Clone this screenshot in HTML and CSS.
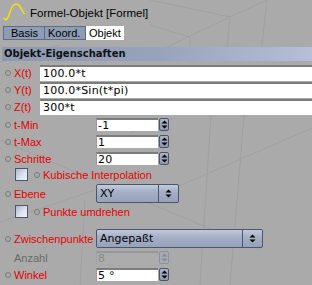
FILE: index.html
```html
<!DOCTYPE html>
<html>
<head>
<meta charset="utf-8">
<link rel="stylesheet" href="styles.css">
</head>
<body>
<div class="win">
  <svg class="bg" width="312" height="285" viewBox="0 0 312 285">
    <g stroke="#a0a0a0" stroke-width="1" fill="none">
      <line x1="150" y1="0" x2="230" y2="17"/>
      <line x1="230" y1="17" x2="267" y2="0"/>
      <line x1="230" y1="17" x2="226" y2="62"/>
      <line x1="267" y1="0" x2="260" y2="62"/>
      <line x1="150" y1="25" x2="190" y2="37"/>
      <line x1="190" y1="37" x2="190" y2="62"/>
      <line x1="230" y1="17" x2="150" y2="55"/>
      <line x1="60" y1="45" x2="0" y2="62"/>
      <line x1="211" y1="115" x2="200" y2="285"/>
      <line x1="244" y1="115" x2="230" y2="285"/>
      <line x1="312" y1="128" x2="170" y2="190"/>
      <line x1="175" y1="118" x2="130" y2="133"/>
      <line x1="0" y1="140" x2="260" y2="250"/>
      <line x1="0" y1="222" x2="95" y2="190"/>
      <line x1="80" y1="285" x2="85" y2="200"/>
    </g>
  </svg>
  <div class="title">
    <svg class="icon" width="24" height="20" viewBox="0 0 24 20">
      <path d="M1 16 C2.5 19 4.5 18 6 13 C8 6 10 2 13 2 C15.5 2 17 4 18.5 7 C19.5 9 20.5 11 21.5 12" stroke="#f2e400" stroke-width="1.5" fill="none"/>
    </svg>
    <span class="title-text">Formel-Objekt [Formel]</span>
  </div>
  <div class="tabs">
    <div class="tab t1">Basis</div>
    <div class="tab t2">Koord.</div>
    <div class="tab t3 active">Objekt</div>
  </div>
  <div class="section">Objekt-Eigenschaften</div>

  <div class="row frow f1">
    <span class="dot"></span><span class="lbl flbl">X(t)</span>
    <div class="wide">100.0*t</div>
  </div>
  <div class="row frow">
    <span class="dot"></span><span class="lbl flbl">Y(t)</span>
    <div class="wide">100.0*Sin(t*pi)</div>
  </div>
  <div class="row frow">
    <span class="dot"></span><span class="lbl flbl">Z(t)</span>
    <div class="wide">300*t</div>
  </div>

  <div class="row nrow n1">
    <span class="dot"></span><span class="lbl">t-Min</span>
    <div class="num">-1</div><div class="spin"><svg width="7" height="9" viewBox="0 0 7 9"><path d="M3.5 0.5 L6.5 3.5 L0.5 3.5 Z M3.5 8.5 L6.5 5.5 L0.5 5.5 Z" fill="#000"/></svg></div>
  </div>
  <div class="row nrow">
    <span class="dot"></span><span class="lbl">t-Max</span>
    <div class="num">1</div><div class="spin"><svg width="7" height="9" viewBox="0 0 7 9"><path d="M3.5 0.5 L6.5 3.5 L0.5 3.5 Z M3.5 8.5 L6.5 5.5 L0.5 5.5 Z" fill="#000"/></svg></div>
  </div>
  <div class="row nrow">
    <span class="dot"></span><span class="lbl">Schritte</span>
    <div class="num">20</div><div class="spin"><svg width="7" height="9" viewBox="0 0 7 9"><path d="M3.5 0.5 L6.5 3.5 L0.5 3.5 Z M3.5 8.5 L6.5 5.5 L0.5 5.5 Z" fill="#000"/></svg></div>
  </div>

  <div class="row crow c1">
    <span class="check"></span><span class="dot cdot"></span><span class="clbl">Kubische Interpolation</span>
  </div>

  <div class="row drow d1">
    <span class="dot"></span><span class="lbl">Ebene</span>
    <div class="drop small"><span class="dtext">XY</span><span class="darrow"><svg width="7" height="9" viewBox="0 0 7 9"><path d="M3.5 0.5 L6.5 3.5 L0.5 3.5 Z M3.5 8.5 L6.5 5.5 L0.5 5.5 Z" fill="#000"/></svg></span></div>
  </div>

  <div class="row crow c2">
    <span class="check"></span><span class="dot cdot"></span><span class="clbl">Punkte umdrehen</span>
  </div>

  <div class="row drow d2">
    <span class="dot"></span><span class="lbl">Zwischenpunkte</span>
    <div class="drop large"><span class="dtext">Angepaßt</span><span class="darrow"><svg width="7" height="9" viewBox="0 0 7 9"><path d="M3.5 0.5 L6.5 3.5 L0.5 3.5 Z M3.5 8.5 L6.5 5.5 L0.5 5.5 Z" fill="#000"/></svg></span></div>
  </div>

  <div class="row nrow n2 dis">
    <span class="nodot"></span><span class="lbl">Anzahl</span>
    <div class="num">8</div><div class="spin"><svg width="7" height="9" viewBox="0 0 7 9"><path d="M3.5 0.5 L6.5 3.5 L0.5 3.5 Z M3.5 8.5 L6.5 5.5 L0.5 5.5 Z" fill="#858a94"/></svg></div>
  </div>
  <div class="row nrow">
    <span class="dot"></span><span class="lbl">Winkel</span>
    <div class="num">5 °</div><div class="spin"><svg width="7" height="9" viewBox="0 0 7 9"><path d="M3.5 0.5 L6.5 3.5 L0.5 3.5 Z M3.5 8.5 L6.5 5.5 L0.5 5.5 Z" fill="#000"/></svg></div>
  </div>
</div>
</body>
</html>
```
FILE: styles.css
```css
html, body {
  margin: 0;
  padding: 0;
  background: #aaaaaa;
}
.win {
  position: relative;
  width: 312px;
  height: 285px;
  overflow: hidden;
  font-family: "Liberation Sans", Arial, sans-serif;
  font-size: 11px;
  color: #000;
}
.bg {
  position: absolute;
  left: 0;
  top: 0;
}
.title, .tabs, .section, .row {
  position: relative;
}
.title {
  display: flex;
  align-items: center;
  height: 26px;
  padding-left: 3px;
}
.icon {
  margin-right: 3px;
  margin-top: -2px;
}
.title-text {
  font-size: 11.5px;
  margin-top: -1px;
}
.tabs {
  display: flex;
  margin-left: 3px;
  height: 14px;
}
.tab {
  box-sizing: border-box;
  height: 14px;
  background: #8e9cb4;
  border: 1px solid #5f6c82;
  border-right: none;
  line-height: 12px;
  font-size: 11px;
}
.t1 {
  width: 41px;
  padding-left: 7px;
}
.t2 {
  width: 42px;
  padding-left: 3px;
  border-right: 1px solid #5f6c82;
}
.t3 {
  width: 38px;
  padding-left: 2px;
}
.tab.active {
  background: #ffffff;
  border-color: #ffffff;
}
.section {
  margin: 7px 0 0 2px;
  height: 14px;
  line-height: 14px;
  padding-left: 2px;
  font-family: "DejaVu Sans", sans-serif;
  font-weight: bold;
  font-size: 10px;
  color: #111;
  background: linear-gradient(to right, #8c9ab1 0%, #97a3bb 50%, #b6bed8 100%);
}
.row {
  display: flex;
  align-items: center;
}
.dot {
  box-sizing: border-box;
  width: 6px;
  height: 6px;
  border: 1px solid #7a7a7a;
  border-radius: 50%;
  margin-left: 5px;
  margin-right: 3px;
  flex: none;
}
.cdot {
  margin-left: 6px;
  margin-right: 3px;
}
.nodot {
  width: 6px;
  margin-left: 5px;
  margin-right: 3px;
  flex: none;
}
.lbl {
  color: #e60000;
  width: 82px;
  flex: none;
  white-space: nowrap;
}
.flbl {
  width: 26px;
}
.frow {
  height: 16px;
  margin-top: 1px;
}
.f1 {
  margin-top: 4px;
}
.wide {
  flex: 1;
  box-sizing: border-box;
  height: 16px;
  background: #fff;
  border-top: 2px solid #7c7c7c;
  padding-left: 3px;
  font-family: "DejaVu Sans", sans-serif;
  font-size: 11px;
  line-height: 14px;
  letter-spacing: 0.2px;
}
.nrow {
  height: 13px;
  margin-top: 4px;
}
.n1 {
  margin-top: 3px;
}
.n2 {
  margin-top: 3px;
}
.num {
  box-sizing: border-box;
  width: 62px;
  height: 13px;
  background: #fff;
  border-top: 2px solid #7c7c7c;
  border-left: 1px solid #9a9a9a;
  padding-left: 1px;
  font-family: "DejaVu Sans", sans-serif;
  font-size: 11px;
  line-height: 11px;
  letter-spacing: 0.2px;
}
.spin {
  box-sizing: border-box;
  width: 10px;
  height: 13px;
  margin-left: 1px;
  background: linear-gradient(to bottom, #a9b3c8, #8c99b2);
  border: 1px solid #4a566c;
  border-radius: 2px;
  display: flex;
  align-items: center;
  justify-content: center;
}
.dis .lbl {
  color: #6a6a6a;
}
.dis .num {
  background: #acacac;
  color: #8a8a8a;
  border-top-color: #979797;
  border-left-color: #a2a2a2;
}
.dis .spin {
  background: #a5aab4;
  border-color: #8c919b;
}
.crow {
  height: 13px;
  margin-top: 3px;
}
.c2 {
  margin-top: 2px;
}
.check {
  box-sizing: border-box;
  width: 13px;
  height: 13px;
  margin-left: 15px;
  background: linear-gradient(135deg, #aeb7ca 0%, #dfe4ee 60%, #eef1f7 100%);
  border: 1px solid #4a566c;
  flex: none;
}
.clbl {
  color: #e60000;
  white-space: nowrap;
}
.drow {
  height: 19px;
  margin-top: 3px;
}
.d2 {
  margin-top: 11px;
}
.drop {
  box-sizing: border-box;
  height: 19px;
  border: 1px solid #4a566c;
  border-radius: 2px;
  background: linear-gradient(to bottom, #c3cadb 0%, #a5b0c6 40%, #96a2bb 100%);
  display: flex;
  align-items: stretch;
}
.drop.small {
  width: 83px;
}
.drop.large {
  width: 167px;
}
.dtext {
  flex: 1;
  padding-left: 3px;
  line-height: 17px;
  font-family: "DejaVu Sans", sans-serif;
  font-size: 11px;
}
.darrow {
  width: 19px;
  flex: none;
  border-left: 1px solid #4a566c;
  display: flex;
  align-items: center;
  justify-content: center;
}
```
